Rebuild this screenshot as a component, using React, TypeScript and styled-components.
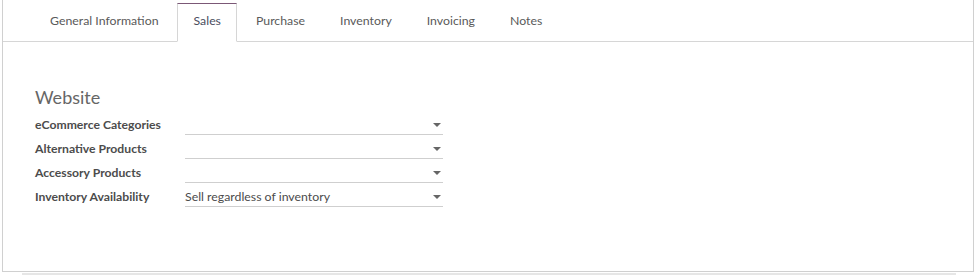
import React, { FC } from 'react';
import styled, { createGlobalStyle } from 'styled-components';

const GlobalStyle = createGlobalStyle`
  html, body {
    margin: 0;
    padding: 0;
    background: #ffffff;
  }
  body {
    font-family: Lato, "Open Sans", sans-serif;
    font-size: 12.3px;
    color: #4c4c4c;
  }
`;

const Page = styled.div`
  padding: 0 2px;
`;

const Sheet = styled.div`
  height: 271px;
  border: 1px solid #d0d0d0;
  border-top: none;
  background: #ffffff;
  display: flex;
  flex-direction: column;
`;

const PaperEdge = styled.div`
  height: 2px;
  margin: 1px 18px 0 20px;
  background: #e6e6e6;
`;

const TabList = styled.ul`
  display: flex;
  margin: 3px 0 0;
  padding: 0 0 0 30.5px;
  list-style: none;
  border-bottom: 1px solid #d6d6d6;
`;

const Tab = styled.li<{ $active?: boolean }>`
  margin: 0 2px -1px 0;
  padding: 8px 15.5px 11px;
  line-height: 18px;
  font-size: 12.3px;
  color: ${(p) => (p.$active ? '#4a4e5e' : '#5a5a5a')};
  border: 1px solid ${(p) => (p.$active ? '#d6d6d6' : 'transparent')};
  border-top-color: ${(p) => (p.$active ? '#7b5876' : 'transparent')};
  border-bottom-color: ${(p) => (p.$active ? '#ffffff' : 'transparent')};
  background: ${(p) => (p.$active ? '#ffffff' : 'transparent')};
  cursor: pointer;
`;

const Pane = styled.div`
  padding: 43px 32px 0;
`;

const Title = styled.div`
  font-size: 18px;
  line-height: 24px;
  color: #666666;
  margin-bottom: 3px;
`;

const FieldGrid = styled.div`
  display: grid;
  grid-template-columns: 150px 258px;
  grid-auto-rows: 24px;
  align-items: center;
`;

const Label = styled.label`
  font-weight: bold;
  font-size: 12.2px;
  color: #4c4c4c;
`;

const Select = styled.div`
  position: relative;
  height: 19px;
  margin-top: 1px;
  border-bottom: 1px solid #cfcfcf;
  font-size: 12.3px;
  line-height: 19px;
  color: #4c4c4c;
`;

const Caret = styled.span`
  position: absolute;
  right: 2px;
  top: 8px;
  width: 0;
  height: 0;
  border-left: 4px solid transparent;
  border-right: 4px solid transparent;
  border-top: 4px solid #666666;
`;

const TABS = ['General Information', 'Sales', 'Purchase', 'Inventory', 'Invoicing', 'Notes'];

const FIELDS: { label: string; value?: string }[] = [
  { label: 'eCommerce Categories' },
  { label: 'Alternative Products' },
  { label: 'Accessory Products' },
  { label: 'Inventory Availability', value: 'Sell regardless of inventory' },
];

const Field: FC<{ label: string; value?: string }> = ({ label, value }) => (
  <>
    <Label>{label}</Label>
    <Select>
      {value}
      <Caret />
    </Select>
  </>
);

const App: FC = () => {
  return (
    <Page>
      <GlobalStyle />
      <Sheet>
        <TabList>
          {TABS.map((t) => (
            <Tab key={t} $active={t === 'Sales'}>
              {t}
            </Tab>
          ))}
        </TabList>
        <Pane>
          <Title>Website</Title>
          <FieldGrid>
            {FIELDS.map((f) => (
              <Field key={f.label} label={f.label} value={f.value} />
            ))}
          </FieldGrid>
        </Pane>
      </Sheet>
      <PaperEdge />
    </Page>
  );
};

export default App;
